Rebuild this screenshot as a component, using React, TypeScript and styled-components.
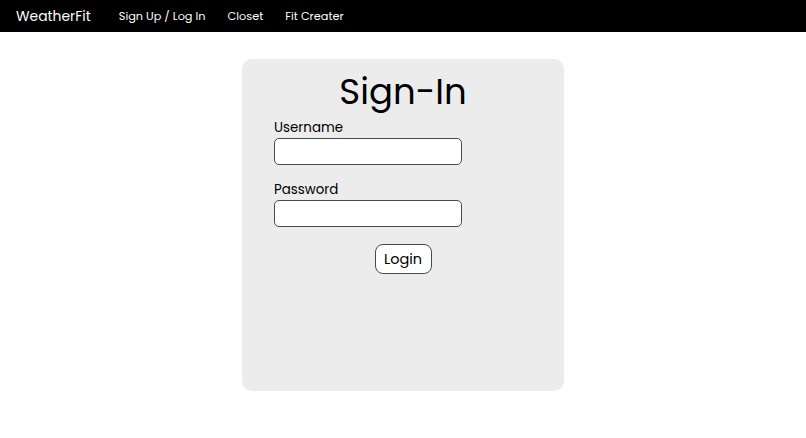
import styled, { createGlobalStyle } from "styled-components";

const GlobalStyle = createGlobalStyle`
  body {
    margin: 0;
    background: #ffffff;
    font-family: "Poppins", "Inter", "Noto Sans", sans-serif;
    color: #000;
  }
`;

const App = () => {
  return (
    <>
      <GlobalStyle />
      <NavBar>
        <Brand>WeatherFit</Brand>
        <NavLinks>
          <NavLink>Sign Up / Log In</NavLink>
          <NavLink>Closet</NavLink>
          <NavLink>Fit Creater</NavLink>
        </NavLinks>
      </NavBar>
      <Main>
        <Card>
          <Title>Sign-In</Title>
          <Form>
            <Field>
              <Label htmlFor="username">Username</Label>
              <Input id="username" type="text" />
            </Field>
            <Field>
              <Label htmlFor="password">Password</Label>
              <Input id="password" type="password" />
            </Field>
            <ButtonRow>
              <LoginButton type="button">Login</LoginButton>
            </ButtonRow>
          </Form>
        </Card>
      </Main>
    </>
  );
};

const NavBar = styled.nav`
  height: 32px;
  background: #000;
  display: flex;
  align-items: center;
  padding: 0 16px;
  gap: 28px;
`;

const Brand = styled.span`
  color: #fff;
  font-size: 13.9px;
`;

const NavLinks = styled.div`
  display: flex;
  gap: 22px;
`;

const NavLink = styled.a`
  color: #fff;
  font-size: 11.3px;
  cursor: pointer;
`;

const Main = styled.main`
  display: flex;
  justify-content: center;
  padding-top: 27px;
`;

const Card = styled.section`
  width: 322px;
  height: 332px;
  box-sizing: border-box;
  background: #ececec;
  border-radius: 10px;
  padding: 12px 32px 0;
`;

const Title = styled.h1`
  margin: 0;
  text-align: center;
  font-size: 35.5px;
  font-weight: 400;
  line-height: 42px;
`;

const Form = styled.form`
  display: flex;
  flex-direction: column;
  gap: 16px;
  margin-top: 6px;
`;

const Field = styled.div`
  display: flex;
  flex-direction: column;
  gap: 2px;
`;

const Label = styled.label`
  font-size: 13.4px;
  line-height: 17px;
`;

const Input = styled.input`
  width: 188px;
  height: 27px;
  box-sizing: border-box;
  border: 1.5px solid #4a4a4a;
  border-radius: 5px;
  background: #fff;
  font-family: inherit;
  outline: none;
`;

const ButtonRow = styled.div`
  display: flex;
  justify-content: center;
  margin-top: 1px;
`;

const LoginButton = styled.button`
  width: 57px;
  height: 30px;
  box-sizing: border-box;
  border: 1.5px solid #4a4a4a;
  border-radius: 8px;
  background: #fff;
  font-family: inherit;
  font-size: 14.5px;
  color: #000;
  padding: 0;
  cursor: pointer;
`;

export default App;
